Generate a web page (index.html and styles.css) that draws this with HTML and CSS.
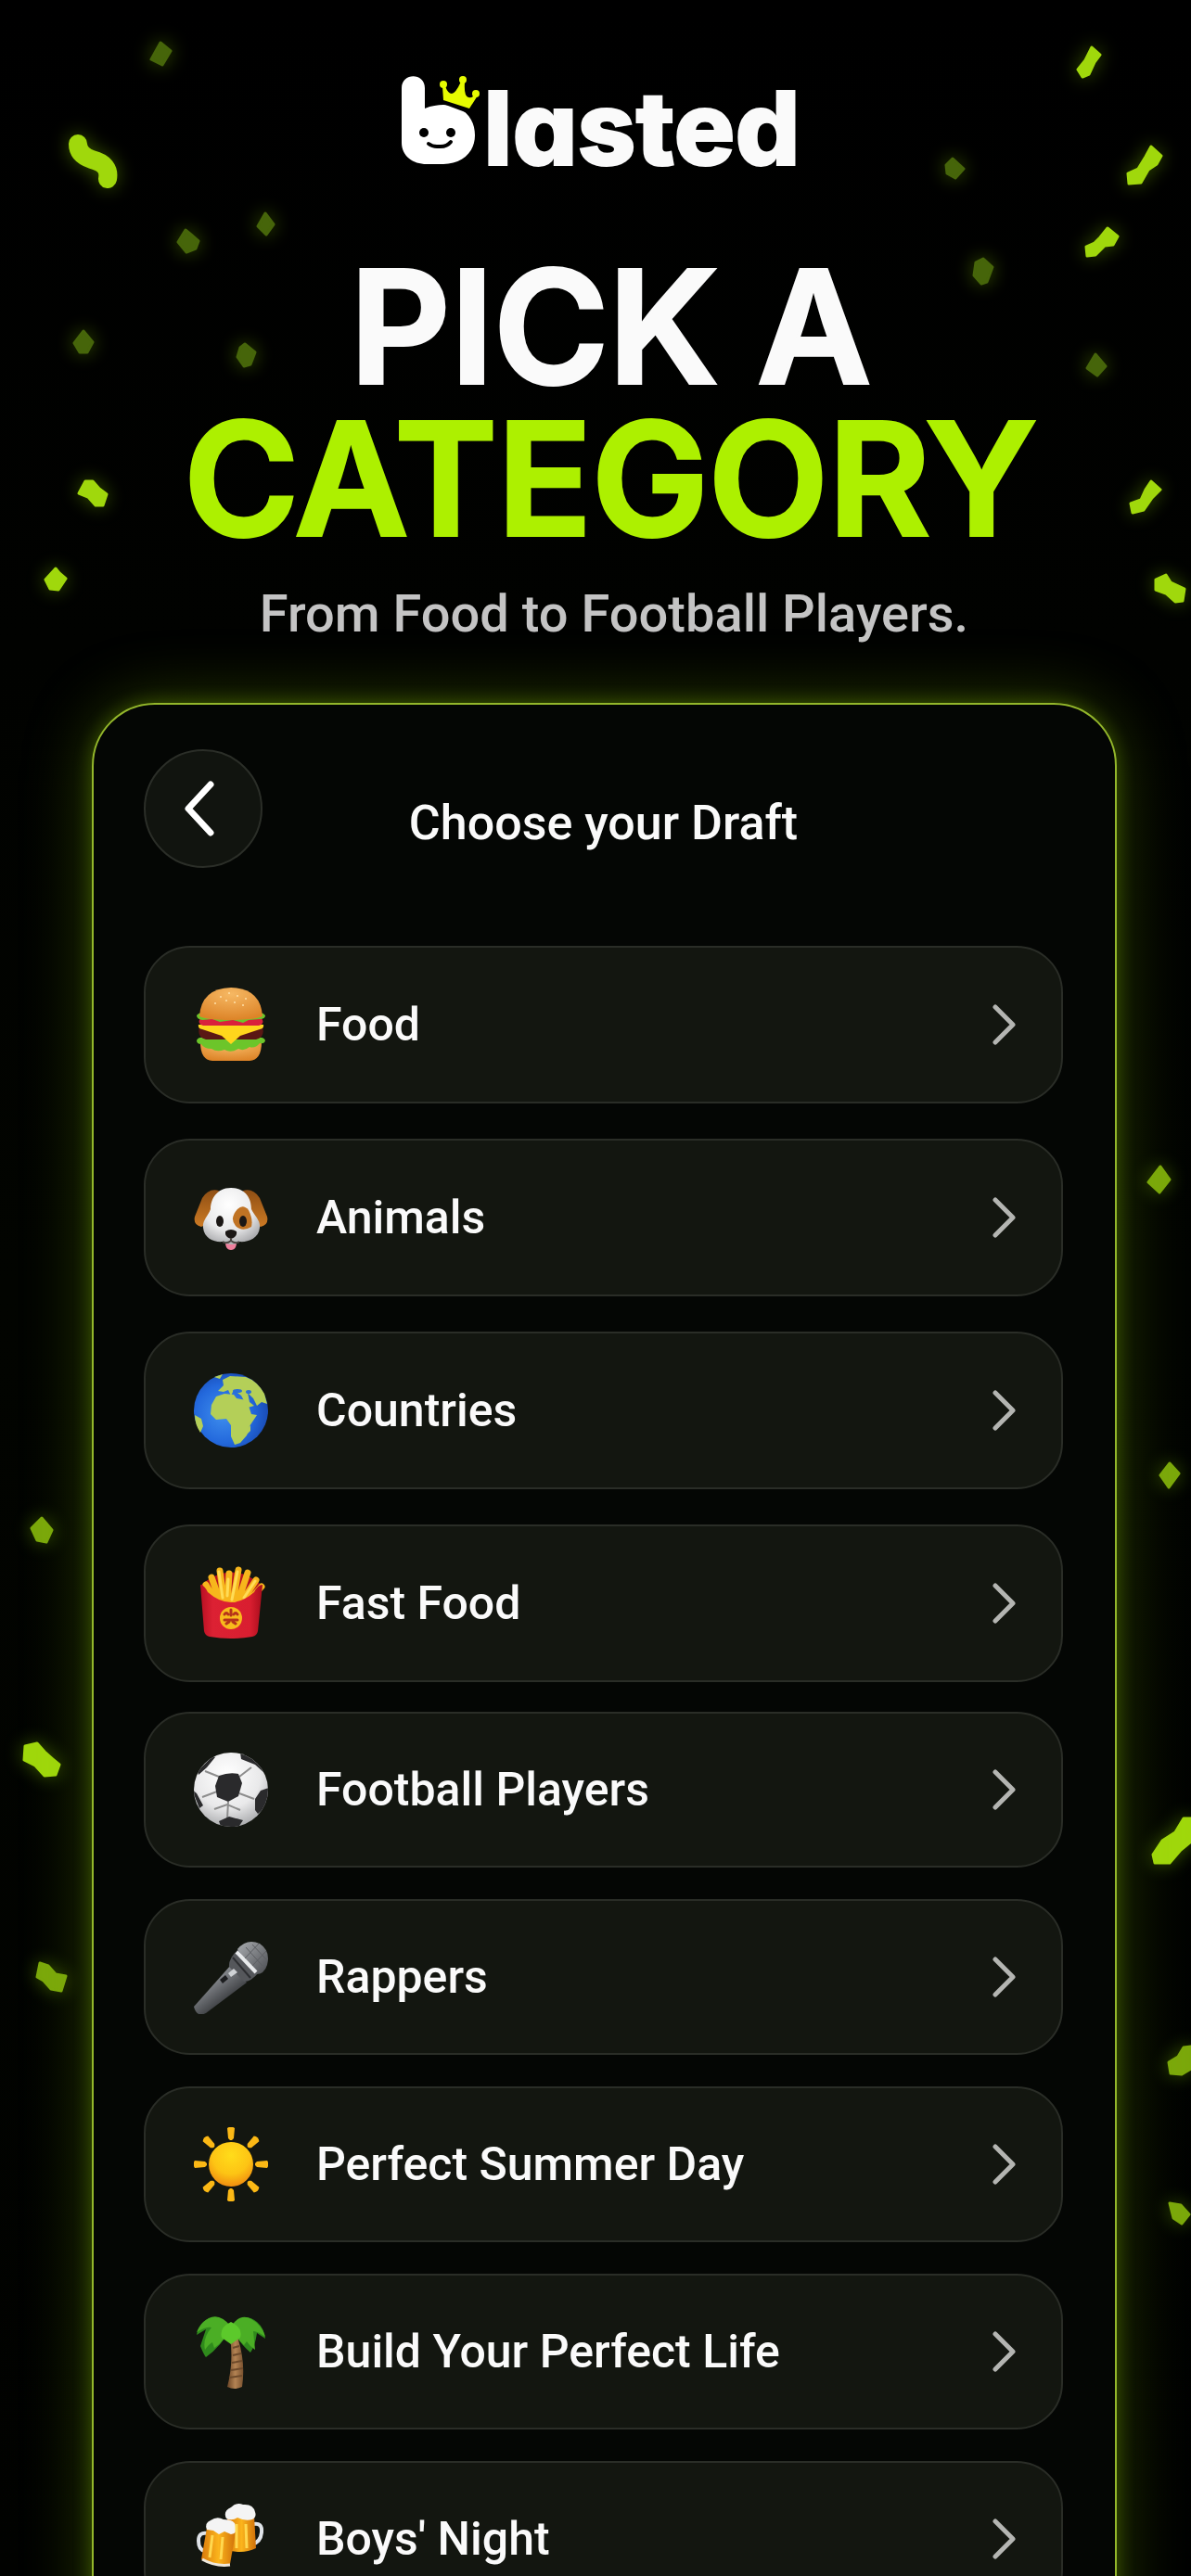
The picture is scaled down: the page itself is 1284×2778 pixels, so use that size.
FILE: index.html
```
<!DOCTYPE html>
<html lang="en">
<head>
  <meta charset="UTF-8" />
  <meta name="viewport" content="width=device-width, initial-scale=1" />
  <title>Blasted - Pick a Category</title>
  <link rel="stylesheet" href="styles.css">
</head>
<body>

<svg class="confetti" viewBox="0 0 1284 2778" aria-hidden="true">
  <g class="dark">
    <path d="M173 46l11 9-9 15-12-6z" />
    <path d="M200 248l6 5 8 7-3 8-10 4-9-11z" />
    <path d="M286 230l9 12-8 11-9-9z" />
    <path d="M90 357l10 12-6 11h-8l-6-10z" />
    <path d="M264 371l11 9-5 13-7 2-7-10 3-10z" />
    <path d="M1027 171l12 11-9 10-9-5-1-9z" />
    <path d="M1060 279l10 9-6 16-6 2-8-9 2-14z" />
    <path d="M1181 382l11 13-9 10-11-8z" />
  </g>
  <g class="mid">
    <path d="M1251 1258l10 14-11 14-12-11z" />
    <path d="M1261 1578l10 11-11 15-9-13z" />
    <path d="M45 1637l11 13-6 13-10-2-6-13z" />
    <path d="M1261 2376l12 2 9 10-8 10-9-6z" />
    <path d="M43 2117l9 3 8 9 11 2-5 16-11-2-8-9-7-4z" />
    <path d="M1284 2207l-8 1-6 10-10 6 2 12 12 1 10-6z" />
  </g>
  <g class="bright">
    <path class="ribbon" d="M84 155q0 12 15 17 20 5 17 21" />
    <path d="M60 613l4 5 7 6-8 12-9-1-5-10z" />
    <path d="M92 519h8l7 8 8 6-4 12h-8l-8-9-10-4z" />
    <path d="M1177 51l9 8-6 8-6 13-7 3-5-8 8-10z" />
    <path d="M1241 158l11 10-5 9-9 6-8 14-13 1-1-11 11-5 8-13z" />
    <path d="M1194 246l11 9-5 9-9 1-10 10-9 1-1-10 9-4 6-6z" />
    <path d="M1241 519l10 9-9 9-9 13-12 3-2-10 11-4 5-11z" />
    <path d="M1257 620l5 8 15 7-2 13-8 1-10-9-11-4 0-11z" />
    <path d="M1284 1961h-8l-9 15-14 9-10 15 2 9h16l12-14 11-9z" />
    <path d="M27 1883l13-3 8 9 9 8 7 6-4 11-12 1-10-11-12-6z" />
  </g>
</svg>

<header class="hero">
  <div class="logo">
    <svg class="logo-b" viewBox="0 0 88 96" aria-hidden="true">
      <path fill="#fff" d="M0 13C0-4 25-4 25 13v22c7-3 14-4 20-4 21 0 34 14 34 33s-15 31-34 31H27C12 95 0 86 0 72z" />
      <path fill="#000" d="M42 29l32 12 8-6-8-12z" />
      <path fill="#fff" d="M40 33q14-1 25 7l-8 5z" />
      <g fill="#e6fb00">
        <path d="M45 26l-1-15h3q3 8 7 8t10-13l4 1q-1 15 4 16t7-4l3 2-9 14z" />
        <circle cx="45" cy="9" r="4" /><circle cx="66" cy="4" r="4" /><circle cx="80" cy="19" r="4" />
      </g>
      <circle cx="24" cy="61" r="5" /><circle cx="53" cy="61" r="5" />
      <path d="M29 73q4 3 9 3h4q7 0 11-5" fill="none" stroke="#000" stroke-width="4" stroke-linecap="round" />
    </svg>
    <span>lasted</span>
  </div>
  <h1>PICK A<br><em>CATEGORY</em></h1>
  <p>From Food to Football Players.</p>
</header>

<main class="panel">
  <div class="panel-head">
    <button class="back" type="button" aria-label="Back">
      <svg viewBox="0 0 32 60"><path d="M28 4L4 30l24 26" /></svg>
    </button>
    <h2>Choose your Draft</h2>
  </div>

  <ul class="drafts">
    <li><a href="#food">
      <svg class="emoji" viewBox="0 0 80 80">
        <path fill="url(#bun)" d="M7 59h66q0 19-13 20H20Q7 78 7 59z" />
        <path fill="#6cc52a" d="M3 57q2-4 8-3h58q6-1 8 3-1 4-6 3-5 6-11 4-6 5-12 2-8 5-15 1-8 3-14-1-8 0-11-5-5 0-5-4z" />
        <path fill="#5a1714" d="M6 42h68q3 12-7 14H13Q3 54 6 42z" />
        <path fill="#ffd61c" d="M5 40h70q1 4-4 5L50 52l-10 9-10-9L9 45q-5-1-4-5z" />
        <path fill="#d9213c" d="M7 33h66q4 6-3 8H10q-7-2-3-8z" />
        <path fill="#6cc52a" d="M3 30q3-4 8-2h58q5-2 8 2 0 4-6 4l-12 1-6 3-11-3-14 2-8-3-11 1q-6-1-6-5z" />
        <path fill="url(#bun)" d="M6 31Q8 1 40 0q32 1 34 31-8 4-34 4T6 31z" />
        <g fill="#ffe0a8"><circle cx="29" cy="10" r="1" /><circle cx="38" cy="6" r="1" /><circle cx="47" cy="9" r="1" /><circle cx="56" cy="12" r="1" /><circle cx="35" cy="14" r="1" /><circle cx="44" cy="16" r="1" /><circle cx="53" cy="19" r="1" /><circle cx="23" cy="17" r="1" /></g>
      </svg>
      <span>Food</span>
      <svg class="chevron" viewBox="0 0 26 44"><path d="M3 3l19 19L3 41" /></svg>
    </a></li>
    <li><a href="#animals">
      <svg class="emoji" viewBox="0 0 80 80">
        <path fill="url(#ear)" d="M27 11Q16 8 9 19L1 39q-2 9 7 11l10-5zM53 11q11-3 18 8l8 20q2 9-7 11l-10-5z" />
        <path fill="#ef7f9c" d="M34 63h12q1 12-6 12t-6-12z" />
        <path fill="url(#fur)" d="M40 8c17 0 22 13 22 23 4 8 10 12 9 20-1 12-14 16-22 15-4 4-14 4-18 0-8 1-20-3-21-15-1-8 5-12 8-20C18 21 24 8 40 8z" />
        <path fill="#c07324" d="M47 31q6-6 12 1 5 10 3 18-10 6-17-1-7-8 2-18z" />
        <ellipse cx="28" cy="44" rx="4" ry="6" fill="#1b1715" /><ellipse cx="53" cy="44" rx="4" ry="6" fill="#1b1715" />
        <path fill="#1b1715" d="M34 55q6-4 12 0 1 6-6 8-7-2-6-8z" />
        <path d="M40 62v3q-5 4-9 1M40 65q5 4 9 1" fill="none" stroke="#4a4440" stroke-width="2" />
      </svg>
      <span>Animals</span>
      <svg class="chevron" viewBox="0 0 26 44"><path d="M3 3l19 19L3 41" /></svg>
    </a></li>
    <li><a href="#countries">
      <svg class="emoji" viewBox="0 0 80 80">
        <circle cx="40" cy="40" r="40" fill="url(#sea)" />
        <g fill="#b4cf58">
          <path d="M24 25l9-3 10 1 3 4 11 2 5 15 6 1-8 12-3 10-7 8-6 2-4-9 0-12-5-7-11 1-6-6 1-10z" />
          <path d="M26 19l6-6-1-6 8-4 17 1q12 4 20 18l3 11-6-2-5 4-4-8-6-6 2 10 5 4-7 2-7-13-8-6-3 6-3-6-5 2z" />
          <path d="M1 45l7 4 2 8-3 7Q1 55 1 45zM22 4l9-3-3 5z" />
          <path d="M57 61l4-5 0 6-5 5z" />
        </g>
        <g fill="#2a6fd6"><ellipse cx="47" cy="19" rx="5" ry="2" /><ellipse cx="59" cy="20" rx="3" ry="2" /></g>
      </svg>
      <span>Countries</span>
      <svg class="chevron" viewBox="0 0 26 44"><path d="M3 3l19 19L3 41" /></svg>
    </a></li>
    <li><a href="#fast-food">
      <svg class="emoji" viewBox="0 0 80 80">
        <path fill="#b5121f" d="M7 21Q40-8 74 21l-6 14H13z" />
        <g stroke="#f7b61c" stroke-width="7" stroke-linecap="round">
          <path d="M19 12l10 28M28 5l5 36M38 8l-2 34M48 4l-6 36M58 7L47 40M67 15L52 38M73 22L57 40M13 20l12 20" />
        </g>
        <g stroke="#ffdc56" stroke-width="3" stroke-linecap="round"><path d="M27 6l4 28M47 6l-6 30M66 16L54 34M37 14l-1 18" /></g>
        <path fill="url(#box)" d="M7 20q4 0 8 8 25 22 50 0 4-8 9-8l-5 50q-1 5-6 6-23 4-46 0-5-1-6-6z" />
        <circle cx="40" cy="56" r="12" fill="#f8ba1c" />
        <g fill="none" stroke="#b5321a" stroke-width="3" stroke-linecap="round"><path d="M33 52q2-3 4 0M43 52q2-3 4 0M40 47v6M33 58h14M35 62l3-2M42 60l3 2" /></g>
      </svg>
      <span>Fast Food</span>
      <svg class="chevron" viewBox="0 0 26 44"><path d="M3 3l19 19L3 41" /></svg>
    </a></li>
  </ul>

  <ul class="drafts more">
    <li><a href="#football-players">
      <svg class="emoji" viewBox="0 0 80 80">
        <clipPath id="ball"><circle cx="40" cy="40" r="40" /></clipPath>
        <circle cx="40" cy="40" r="40" fill="url(#fur)" />
        <g clip-path="url(#ball)">
          <g fill="none" stroke="#8d8d8d" stroke-width="2"><path d="M27 26L12 20M49 26l13-10M49 44l16 6M37 53l-1 18M25 42L9 48M22 61l14-5 14 6" /></g>
          <g fill="#2a2a2c">
            <path d="M27 25q11-4 21-2l4 10-4 14-11 6-12-5-2-12z" />
            <path d="M4 20L20 4l3 1-9 11-9 8zM50 0l20 10 6 12-10-9-15-6zM66 50l6-9 9-3v18l-12 10-3-4zM27 74l11-5 15 4-6 9H30zM-2 40l5 4 7 13-4 3z" />
          </g>
        </g>
      </svg>
      <span>Football Players</span>
      <svg class="chevron" viewBox="0 0 26 44"><path d="M3 3l19 19L3 41" /></svg>
    </a></li>
    <li><a href="#rappers">
      <svg class="emoji" viewBox="0 0 80 80">
        <path fill="url(#mic)" d="M40 27l17 19L13 79Q3 84 0 72z" />
        <path fill="#55575b" d="M38 29q-1-9 10-19l22 25q-8 10-16 10z" />
        <path fill="url(#head)" d="M47 10Q57-2 71 4q12 8 8 23-3 10-12 10z" />
        <path d="M46 13l21 22" stroke="#e8eaec" stroke-width="4" />
        <path d="M42 19l19 22" stroke="#2c2d30" stroke-width="2" />
        <path fill="#cfd2d5" d="M37 36l6-5 4 4-7 5z" />
        <path fill="#1c1d1f" d="M28 43l6-5 3 4-6 5z" />
        <path d="M56 8l18 20M63 5l15 16M55 20L70 4M63 28l15-16" stroke="#5c5e62" stroke-width="1" />
      </svg>
      <span>Rappers</span>
      <svg class="chevron" viewBox="0 0 26 44"><path d="M3 3l19 19L3 41" /></svg>
    </a></li>
    <li><a href="#perfect-summer-day">
      <svg class="emoji" viewBox="0 0 80 80">
        <circle cx="40" cy="40" r="24" fill="url(#sun)" />
        <g fill="#fbb815">
          <path id="ray" d="M36 1q4-3 8 0l-1 11-2 2h-2l-2-2z" />
          <use href="#ray" transform="rotate(45 40 40)" /><use href="#ray" transform="rotate(90 40 40)" />
          <use href="#ray" transform="rotate(135 40 40)" /><use href="#ray" transform="rotate(180 40 40)" />
          <use href="#ray" transform="rotate(225 40 40)" /><use href="#ray" transform="rotate(270 40 40)" />
          <use href="#ray" transform="rotate(315 40 40)" />
        </g>
      </svg>
      <span>Perfect Summer Day</span>
      <svg class="chevron" viewBox="0 0 26 44"><path d="M3 3l19 19L3 41" /></svg>
    </a></li>
    <li><a href="#build-your-perfect-life">
      <svg class="emoji" viewBox="0 0 80 80">
        <path fill="url(#trunk)" d="M39 24h8q9 27 5 54-8 4-16 0 7-26 3-54z" />
        <path d="M42 36l7-2M42 44l9-2M41 52l11-2M40 60l13-2M38 68l14-2" stroke="#6d4a2b" stroke-width="2" />
        <path fill="#2f8a1c" d="M40 14Q24-4 10 8 4 14 3 22l10-6-6 18q4 10 6 12Q30 34 40 14zM40 14Q54-4 68 8q8 7 9 18l-9-6q-2 14-7 21-12-10-21-27z" />
        <path fill="#4bae25" d="M40 13Q28-2 16 4 8 8 3 19q10-6 16-5Q9 26 12 38q4-6 8-8l2 6q12-8 18-23zM40 13Q50-2 62 5q12 7 15 19-8-6-13-6l2 20q-6-4-9-9l-3 4Q44 24 40 13z" />
        <path fill="#5cc92b" d="M40 8q-13 6-10 17l10 7 10-7q3-11-10-17z" />
      </svg>
      <span>Build Your Perfect Life</span>
      <svg class="chevron" viewBox="0 0 26 44"><path d="M3 3l19 19L3 41" /></svg>
    </a></li>
    <li><a href="#boys-night">
      <svg class="emoji" viewBox="0 0 80 80">
        <path d="M64 24q10-2 9 9t-11 13" fill="none" stroke="#dfe3e8" stroke-width="4" />
        <path fill="url(#beer)" d="M36 16l29-1 2 35q-14 7-31 2z" />
        <path fill="#f4f4f4" d="M35 18q-4-8 5-12 6-6 13-3 11-1 13 8 2 5-3 8-8 2-16-2-6 4-12 1z" />
        <path d="M15 34q-10-2-10 8t7 11" fill="none" stroke="#dfe3e8" stroke-width="4" />
        <path fill="url(#beer)" d="M14 28l31 5-6 34q-17 3-31-5z" />
        <path fill="#f4f4f4" d="M14 30q-3-7 4-10 7-5 14-1 13 0 13 8 2 7-5 8l-7-3-6 3-6-4z" />
        <path d="M9 62q14 8 30 6" fill="none" stroke="#eee8dc" stroke-width="3" />
        <path d="M20 36l-3 24M31 38l-2 24M46 24v26M56 24l1 26" stroke="#ffd84f" stroke-width="3" />
      </svg>
      <span>Boys' Night</span>
      <svg class="chevron" viewBox="0 0 26 44"><path d="M3 3l19 19L3 41" /></svg>
    </a></li>
  </ul>
</main>

<!-- shared gradients for the icons -->
<svg class="defs" aria-hidden="true">
  <defs>
    <radialGradient id="bun" cx="50%" cy="20%" r="80%"><stop offset="0" stop-color="#f6b863" /><stop offset="1" stop-color="#dd8428" /></radialGradient>
    <linearGradient id="ear" x2="0" y2="1"><stop offset="0" stop-color="#8f4f14" /><stop offset="1" stop-color="#cc7a24" /></linearGradient>
    <radialGradient id="fur" cx="45%" cy="30%" r="75%"><stop offset="0" stop-color="#ffffff" /><stop offset="0.6" stop-color="#e9e9ea" /><stop offset="1" stop-color="#a3a4a7" /></radialGradient>
    <radialGradient id="sea" cx="40%" cy="55%" r="65%"><stop offset="0" stop-color="#3f8fee" /><stop offset="0.6" stop-color="#2368dc" /><stop offset="1" stop-color="#1746ae" /></radialGradient>
    <linearGradient id="box"><stop offset="0" stop-color="#b80f22" /><stop offset="0.2" stop-color="#dc2133" /><stop offset="0.8" stop-color="#d91e30" /><stop offset="1" stop-color="#a80d1c" /></linearGradient>
    <linearGradient id="mic" x1="0.3" y1="0.3" x2="0.7" y2="0.8"><stop offset="0" stop-color="#8b8e93" /><stop offset="1" stop-color="#2c2e31" /></linearGradient>
    <linearGradient id="head" x2="1" y2="1"><stop offset="0" stop-color="#a9acb0" /><stop offset="1" stop-color="#4a4c50" /></linearGradient>
    <radialGradient id="sun" cx="50%" cy="30%" r="70%"><stop offset="0" stop-color="#ffdc1a" /><stop offset="0.6" stop-color="#fdc414" /><stop offset="1" stop-color="#f08d10" /></radialGradient>
    <linearGradient id="trunk"><stop offset="0" stop-color="#6b4526" /><stop offset="0.5" stop-color="#b38353" /><stop offset="1" stop-color="#7b5330" /></linearGradient>
    <linearGradient id="beer"><stop offset="0" stop-color="#d97a0c" /><stop offset="0.5" stop-color="#fbb41c" /><stop offset="1" stop-color="#d0700a" /></linearGradient>
  </defs>
</svg>

</body>
</html>
```
FILE: styles.css
```
* {
  box-sizing: border-box;
}
body {
  position: relative;
  height: 100vh;
  margin: 0;
  overflow: hidden;
  background: linear-gradient(#000, #020400 50%, #010200);
  color: #fafafa;
  font-family: Roboto, "Liberation Sans", sans-serif;
}

/* confetti behind everything */
.confetti {
  position: absolute;
  top: 0;
  left: 0;
  width: 100%;
}
.confetti path {
  stroke-width: 3;
  stroke-linejoin: round;
  stroke-linecap: round;
  filter: drop-shadow(0 0 10px rgba(140, 210, 0, 0.4));
}
.dark { fill: #46650a; stroke: #46650a; }
.mid { fill: #7ba80b; stroke: #7ba80b; }
.bright { fill: #a0d80c; stroke: #a0d80c; }
.confetti .ribbon {
  fill: none;
  stroke-width: 20;
}

.hero {
  position: relative;
  padding: 82px 0 64px 32px;
  font-family: Inter, "Liberation Sans", sans-serif;
  text-align: center;
}
.logo {
  display: flex;
  justify-content: center;
  height: 96px;
  margin: 0 20px 92px 0;
}
.logo-b {
  width: 88px;
  height: 96px;
}
.logo span {
  font-size: 110px;
  font-weight: 800;
  line-height: 112px;
  font-feature-settings: "cv11";
  -webkit-text-stroke: 2px currentColor;
}
h1 {
  margin: 0 0 32px;
  font-size: 168px;
  font-weight: 600;
  line-height: 164px;
  -webkit-text-stroke: 4px currentColor;
}
h1 em {
  font-style: normal;
  color: #adf000;
}
.hero p {
  margin: 0 0 0 8px;
  font-family: Roboto, "Liberation Sans", sans-serif;
  font-size: 56px;
  font-weight: 500;
  line-height: 64px;
  color: #c4c4c4;
}

.panel {
  position: relative;
  margin: 0 80px 0 99px;
  padding: 48px 56px 80px 54px;
  border: 2px solid #93b62b;
  border-radius: 68px;
  background: #040604;
  box-shadow: 0 0 20px rgba(150, 210, 0, 0.3), 0 0 72px rgba(130, 180, 0, 0.35);
}
.panel-head {
  display: grid;
  grid-template-columns: 128px 1fr 128px;
  align-items: end;
  margin-bottom: 84px;
}
.back {
  display: grid;
  place-items: center;
  width: 128px;
  height: 128px;
  padding: 0 8px 0 0;
  border: 2px solid #2b2e28;
  border-radius: 50%;
  background: #11140f;
}
.back svg {
  width: 32px;
  height: 60px;
}
.back path {
  fill: none;
  stroke: #fff;
  stroke-width: 7;
  stroke-linecap: round;
  stroke-linejoin: round;
}
h2 {
  margin: 0;
  font-size: 52px;
  font-weight: 500;
  line-height: 96px;
  text-align: center;
}

.drafts {
  display: grid;
  gap: 38px;
  margin: 0 0 32px;
  padding: 0;
  list-style: none;
}
.drafts a {
  display: flex;
  align-items: center;
  gap: 52px;
  height: 170px;
  padding: 0 48px 0 52px;
  border: 2px solid #2a2d27;
  border-radius: 50px;
  background: #131610;
  color: #fafafa;
  font-size: 50px;
  font-weight: 500;
  text-decoration: none;
}
.drafts span {
  flex: 1;
}
.more {
  gap: 34px;
}
.more a {
  height: 168px;
}
.emoji {
  width: 80px;
  height: 80px;
}
.chevron {
  width: 26px;
  height: 44px;
}
.chevron path {
  fill: none;
  stroke: #b4b5b2;
  stroke-width: 5;
  stroke-linecap: round;
  stroke-linejoin: round;
}
.defs {
  position: absolute;
  width: 0;
  height: 0;
}
```
